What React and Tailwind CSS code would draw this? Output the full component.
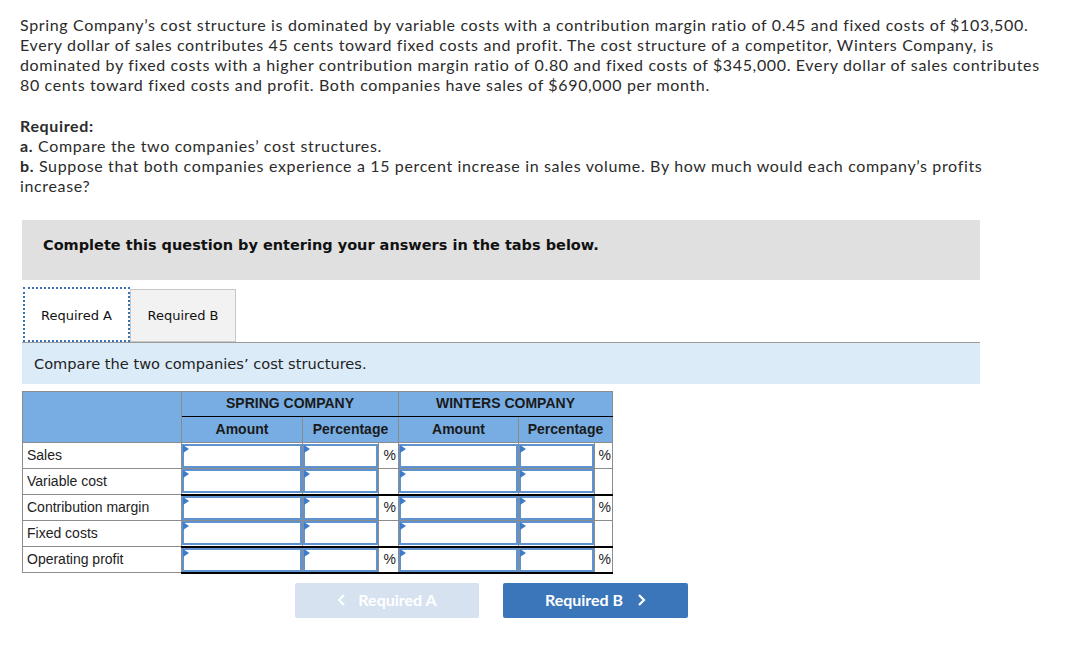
import React from 'react';

const rows = [
  { label: 'Sales', pct: true, total: false },
  { label: 'Variable cost', pct: false, total: false },
  { label: 'Contribution margin', pct: true, total: true },
  { label: 'Fixed costs', pct: false, total: false },
  { label: 'Operating profit', pct: true, total: true },
];

// input box with the little blue marker in the corner
function Field() {
  return (
    <div className="relative h-[24px] w-full border-2 border-[#5f93cf] bg-white">
      <span className="absolute left-[-1px] top-[-1px] h-0 w-0 border-y-[4px] border-l-[6px] border-y-transparent border-l-[#3d7cc9]" />
    </div>
  );
}

function Row({ row, last }) {
  const top = row.total ? 'border-t-2 border-t-black' : '';
  const bottom = last ? 'border-b-2 border-b-black' : '';
  return (
    <tr className="h-[26px]">
      <td className="border border-[#8c8c8c] px-[4px] text-[14px] text-[#222]">{row.label}</td>
      <td className={`border border-[#8c8c8c] p-0 ${top} ${bottom}`}><Field /></td>
      <td className={`border border-[#8c8c8c] p-0 ${top} ${bottom}`}><Field /></td>
      <td className={`border border-[#8c8c8c] pr-[2px] text-right text-[14px] text-[#222] ${top} ${bottom}`}>{row.pct ? '%' : ''}</td>
      <td className={`border border-[#8c8c8c] p-0 ${top} ${bottom}`}><Field /></td>
      <td className={`border border-[#8c8c8c] p-0 ${top} ${bottom}`}><Field /></td>
      <td className={`border border-[#8c8c8c] pr-[1px] text-right text-[14px] text-[#222] ${top} ${bottom}`}>{row.pct ? '%' : ''}</td>
    </tr>
  );
}

export default function App() {
  return (
    <div className="min-h-[649px] w-[1078px] bg-white pl-[20px] pt-[15px] text-[#2b2b2b]">
      {/* question text */}
      <div className="font-['Lato',sans-serif] text-[16px] leading-[20px] tracking-[0.65px]">
        <p>
          Spring Company’s cost structure is dominated by variable costs with a contribution margin ratio of 0.45 and fixed costs of $103,500.<br />
          Every dollar of sales contributes 45 cents toward fixed costs and profit. The cost structure of a competitor, Winters Company, is<br />
          dominated by fixed costs with a higher contribution margin ratio of 0.80 and fixed costs of $345,000. Every dollar of sales contributes<br />
          80 cents toward fixed costs and profit. Both companies have sales of $690,000 per month.
        </p>
        <p className="mt-[21px] font-bold">Required:</p>
        <p><span className="font-bold">a.</span> Compare the two companies’ cost structures.</p>
        <p>
          <span className="font-bold">b.</span> Suppose that both companies experience a 15 percent increase in sales volume. By how much would each company’s profits<br />
          increase?
        </p>
      </div>

      {/* instructions box */}
      <div className="ml-[2px] mt-[24px] h-[60px] w-[958px] bg-[#e0e0e0] pl-[21px] pt-[14px] font-['DejaVu_Sans',sans-serif] text-[14.5px] font-bold leading-[22px] text-[#111]">
        Complete this question by entering your answers in the tabs below.
      </div>

      {/* tabs */}
      <div className="ml-[3px] mt-[7px] flex font-['DejaVu_Sans',sans-serif] text-[13px] text-[#111]">
        <div className="flex h-[55px] w-[107px] items-center justify-center border-2 border-dotted border-[#3b6fb6] bg-white pt-[2px]">
          Required A
        </div>
        <div className="mt-[2px] flex h-[53px] w-[106px] items-center justify-center border border-[#c8c8c8] bg-[#f2f2f2] pt-[1px]">
          Required B
        </div>
      </div>
      <div className="ml-[2px] flex h-[42px] w-[958px] items-center border-t border-[#9a9a9a] bg-[#dcebf8] pl-[12px] font-['DejaVu_Sans',sans-serif] text-[14.6px] text-[#222]">
        Compare the two companies’ cost structures.
      </div>

      {/* answer table */}
      <table className="ml-[2px] mt-[7px] border-collapse font-['Liberation_Sans',Arial,sans-serif]">
        <colgroup>
          <col className="w-[159px]" />
          <col className="w-[121px]" />
          <col className="w-[76px]" />
          <col className="w-[20px]" />
          <col className="w-[120px]" />
          <col className="w-[76px]" />
          <col className="w-[18px]" />
        </colgroup>
        <thead>
          <tr className="h-[25px] bg-[#78ade3] text-[14px] font-bold text-[#1a1a1a]">
            <th rowSpan={2} className="border border-[#8c8c8c]" />
            <th colSpan={3} className="border border-[#8c8c8c] border-b-black pb-[1px]">SPRING COMPANY</th>
            <th colSpan={3} className="border border-[#8c8c8c] border-b-black pb-[1px]">WINTERS COMPANY</th>
          </tr>
          <tr className="h-[26px] bg-[#78ade3] text-[14px] font-bold text-[#1a1a1a]">
            <th className="border border-[#8c8c8c] pb-[1px]">Amount</th>
            <th colSpan={2} className="border border-[#8c8c8c] pb-[1px]">Percentage</th>
            <th className="border border-[#8c8c8c] pb-[1px]">Amount</th>
            <th colSpan={2} className="border border-[#8c8c8c] pb-[1px]">Percentage</th>
          </tr>
        </thead>
        <tbody>
          {rows.map((row, i) => (
            <Row key={row.label} row={row} last={i === rows.length - 1} />
          ))}
        </tbody>
      </table>

      {/* navigation */}
      <div className="ml-[275px] mt-[9px] flex gap-[24px] font-['Lato',sans-serif] text-[16px] font-bold text-white">
        <button className="flex h-[35px] w-[184px] items-center justify-center gap-[12px] rounded-[2px] bg-[#d6e2f0]">
          <svg width="9" height="12" viewBox="0 0 9 12" fill="none" stroke="white" strokeWidth="2.2"><path d="M7 1 2 6l5 5" /></svg>
          Required A
        </button>
        <button className="flex h-[35px] w-[185px] items-center justify-center gap-[14px] rounded-[2px] bg-[#3a76b9]">
          Required B
          <svg width="9" height="12" viewBox="0 0 9 12" fill="none" stroke="white" strokeWidth="2.2"><path d="M2 1l5 5-5 5" /></svg>
        </button>
      </div>
    </div>
  );
}
